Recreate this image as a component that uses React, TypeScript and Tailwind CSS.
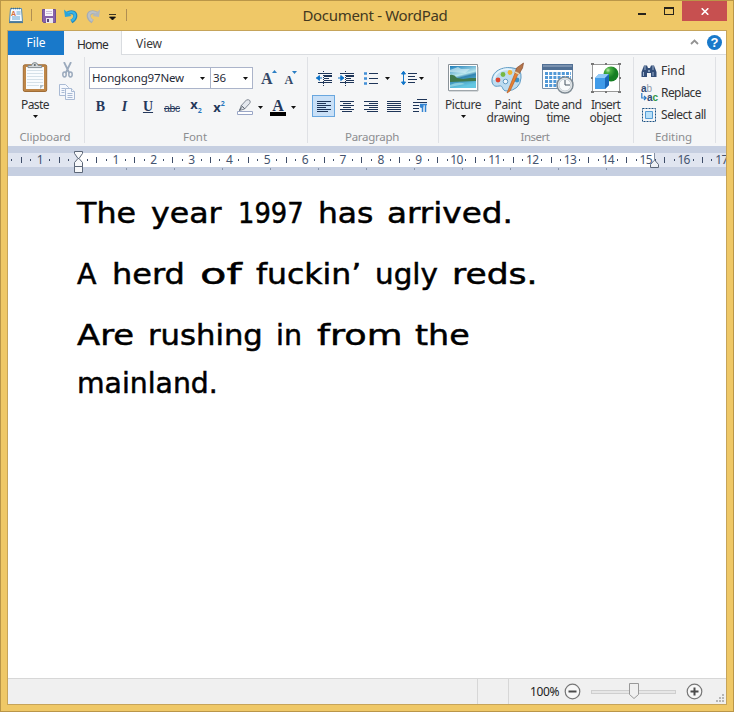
import { useLayoutEffect, useRef, useState } from "react";
import type { ReactNode } from "react";

/** Text run whose tracking is adjusted so that it spans exactly `w` pixels. */
function Fit({ w, children, className = "" }: { w: number; children: string; className?: string }) {
  const ref = useRef<HTMLSpanElement>(null);
  const [spacing, setSpacing] = useState(0);
  useLayoutEffect(() => {
    if (ref.current) {
      const natural = ref.current.getBoundingClientRect().width;
      setSpacing((w - natural) / children.length);
    }
  }, [w, children]);
  return (
    <span ref={ref} className={`inline-block whitespace-pre ${className}`} style={{ letterSpacing: spacing }}>
      {children}
    </span>
  );
}

/** Word whose letters are widened or narrowed so that it spans exactly `w` pixels. */
function Stretch({ w, children, className = "" }: { w: number; children: string; className?: string }) {
  const ref = useRef<HTMLSpanElement>(null);
  const [scale, setScale] = useState(1);
  useLayoutEffect(() => {
    if (ref.current) setScale(w / ref.current.offsetWidth);
  }, [w, children]);
  return (
    <span className={`block shrink-0 ${className}`} style={{ width: w }}>
      <span ref={ref} className="inline-block origin-left whitespace-pre" style={{ transform: `scaleX(${scale})` }}>
        {children}
      </span>
    </span>
  );
}

const Caret = ({ className = "" }: { className?: string }) => (
  <svg width="5" height="3" viewBox="0 0 5 3" className={`shrink-0 ${className}`}>
    <path d="M0 0h5L2.5 3z" fill="#111" />
  </svg>
);

function Group({ label, labelWidth, className, children }: { label: string; labelWidth: number; className: string; children: ReactNode }) {
  return (
    <section className={`flex h-[91px] shrink-0 flex-col ${className}`}>
      <div className="h-[74px]">{children}</div>
      <div className="flex h-4 items-center justify-center pr-[2px] text-[11.5px] leading-4 text-[#8c8d90]">
        <Fit w={labelWidth}>{label}</Fit>
      </div>
    </section>
  );
}

const Divider = () => <div className="mt-0.5 h-[86px] w-px shrink-0 bg-[#dfe1e5]" />;

function AppIcon() {
  return (
    <svg width="16" height="17" viewBox="0 0 16 17">
      <path d="M2.5 1.5h11l1 13h-13z" fill="#f3faff" stroke="#5a8cb0" />
      <path d="M3 1.5h10" stroke="#3f6f92" strokeWidth="1.5" strokeDasharray="1 1" />
      <text x="3" y="8.5" fontSize="7" fontWeight="bold" fontFamily="Liberation Sans" fill="#d9703b">A</text>
      <path d="M8.5 5h4M8.5 7h4M4 10h8M4 12h8" stroke="#69a6d3" />
      <path d="M1 15.3h14" stroke="#4c7896" strokeWidth="1.6" />
    </svg>
  );
}

function SaveIcon() {
  return (
    <svg width="14" height="14" viewBox="0 0 14 14">
      <path d="M.5.5h13v13H1.5l-1-1z" fill="#8862a9" stroke="#70518f" />
      <path d="M3 0h8v7H3z" fill="#f8f4fb" />
      <path d="M4 2.5h6M4 4.5h6" stroke="#cdbfd9" />
      <path d="M4 9h7v5H4z" fill="#e9e5ed" />
      <path d="M5 10h2v3H5z" fill="#5b4474" />
    </svg>
  );
}

function UndoIcon({ redo = false }: { redo?: boolean }) {
  return (
    <svg width="14" height="15" viewBox="0 0 14 15" className={redo ? "-scale-x-100" : ""}>
      <path d="M3 4.8c5-3.2 9-1 8.2 3.2-.4 2-1.7 3.4-3.9 4.6" fill="none" stroke={redo ? "#a5acb3" : "#2188bd"} strokeWidth="4" />
      <path d="M3 4.6c5-3 8.5-1 7.9 3-.4 2-1.6 3.3-3.4 4.2" fill="none" stroke={redo ? "#bcc1c5" : "#37b4e6"} strokeWidth="2.4" />
      <path d="M0 .5 1 8l6.5-1z" fill={redo ? "#b1b7bd" : "#2aa5dc"} />
    </svg>
  );
}

function TitleBar() {
  return (
    <header className="grid h-[30px] grid-cols-[222px_306px_206px]">
      <div className="flex h-[30px] items-center pl-2">
        <AppIcon />
        <div className="ml-[7px] h-3 w-px bg-[#b08e52]" />
        <div className="ml-2.5 flex pt-0.5"><SaveIcon /></div>
        <div className="ml-2 flex pt-0.5"><UndoIcon /></div>
        <div className="ml-2 flex pt-0.5"><UndoIcon redo /></div>
        <svg width="7" height="7" viewBox="0 0 7 7" className="ml-[9px] mt-1">
          <path d="M0 .5h7M.5 3h6L3.5 6z" fill="#111" stroke="#111" strokeWidth=".8" />
        </svg>
        <div className="ml-[10px] h-3 w-px bg-[#b08e52]" />
      </div>
      <div className="flex items-center justify-center text-[15px] leading-5 text-[#43391f]">
        <Fit w={145}>Document - WordPad</Fit>
      </div>
      <div className="flex justify-end pt-px">
        <div className="mr-[18px] mt-3 h-[2px] w-2 bg-[#27231b]" />
        <div className="mr-2 mt-[6px] h-2 w-2.5 border border-t-2 border-[#27231b]" />
        <div className="mr-[7px] flex h-5 w-[45px] items-center justify-center bg-[#c75050]">
          <svg width="8" height="7" viewBox="0 0 8 7"><path d="m.7.3 6.6 6.4m0-6.4L.7 6.7" stroke="#fff" strokeWidth="1.6" /></svg>
        </div>
      </div>
    </header>
  );
}

function Tabs() {
  return (
    <nav className="flex h-6 bg-white text-[12px] leading-4">
      <div className="flex w-14 items-center justify-center bg-[#1979ca] text-white"><Fit w={19}>File</Fit></div>
      <div className="flex w-[58px] items-center justify-center border-r border-[#d9dce0] bg-[#f5f6f7] pt-[3px] text-[#2c2c2c]"><Fit w={31}>Home</Fit></div>
      <div className="flex flex-1 items-center border-b border-[#d9dce0] pl-[14px] pt-[3px] text-[#3a3a3a]">
        <Fit w={26}>View</Fit>
        <svg width="9" height="6" viewBox="0 0 9 6" className="ml-auto mb-1"><path d="m1 5 3.5-3.5L8 5" fill="none" stroke="#929292" strokeWidth="1.8" /></svg>
        <div className="mb-1 ml-2 mr-1 flex size-[15px] items-center justify-center rounded-full bg-[#1979ca] font-['Liberation_Sans'] text-[13px] font-bold leading-none text-white">?</div>
      </div>
    </nav>
  );
}

function PasteIcon() {
  return (
    <svg width="26" height="32" viewBox="0 0 26 32">
      <rect x="1.3" y="3.8" width="23.4" height="26.7" rx="1.5" fill="#bf8748" stroke="#a06d36" />
      <path d="M4 6h18v22H4z" fill="#f9fcfe" />
      <path d="M5 9.5h16M5 12.5h16M5 15.5h16M5 18.5h16M5 21.5h16M5 24.5h12" stroke="#d5e1e9" />
      <path d="M18 28v-4h4z" fill="#adbdc7" />
      <path d="M6 6.6V4.5h3.5Q10 1.6 12.8 1.6t3.4 2.9h3.5v2.1z" fill="#d3d7d9" stroke="#838c90" />
      <circle cx="12.8" cy="3.9" r="1" fill="#59646a" />
    </svg>
  );
}

function Clipboard() {
  return (
    <Group label="Clipboard" labelWidth={51} className="w-[76px]">
      <div className="flex">
        <div className="flex w-[54px] flex-col items-center pt-[6px]">
          <PasteIcon />
          <div className="mt-1 text-[12px] leading-4 text-[#333]"><Fit w={28}>Paste</Fit></div>
          <Caret className="mt-[2px]" />
        </div>
        <div className="-ml-[3px] flex w-4 flex-col items-center pt-[7px]">
          <svg width="11" height="16" viewBox="0 0 11 16" fill="none" stroke="#9baabd">
            <path d="m2 0 5.3 11M9 0 3.7 11" strokeWidth="1.8" />
            <ellipse cx="2.5" cy="12.5" rx="1.7" ry="2.4" strokeWidth="1.5" />
            <ellipse cx="8.5" cy="12.5" rx="1.7" ry="2.4" strokeWidth="1.5" />
          </svg>
          <svg width="16" height="16" viewBox="0 0 16 16" className="mt-1.5" fill="#f5f8fd" stroke="#a9bad4">
            <path d="M.5.5h6l3 3v8h-9z" /><path d="M2.5 4.5h4m-4 2h3m-3 2h3" />
            <path d="M6.5 4.5h6l3 3v8h-9z" /><path d="M12.5 4.5v3h3m-7 2h5m-5 2h5m-5 2h5" />
          </svg>
        </div>
      </div>
    </Group>
  );
}

function FontGroup() {
  return (
    <Group label="Font" labelWidth={24} className="w-[222px]">
      <div className="flex pl-1 pt-3 text-[11.5px] text-[#1f2937]">
        <div className="flex h-[22px] w-[122px] items-center justify-between border border-[#abb4ca] bg-white pl-[2px] pr-[5px]">
          <Fit w={92}>Hongkong97New</Fit><Caret />
        </div>
        <div className="-ml-px flex h-[22px] w-[43px] items-center justify-between border border-[#abb4ca] bg-white pl-[2px] pr-[4px]">
          <Fit w={13}>36</Fit><Caret />
        </div>
        <div className="ml-2 flex font-['Liberation_Serif'] font-bold leading-none text-[#334766]">
          <span className="mt-1 text-[16px]">A</span>
          <svg width="5" height="3" viewBox="0 0 5 3" className="mt-[3px] -ml-px"><path d="M0 3 2.5 0 5 3z" fill="#2a7ec4" /></svg>
          <span className="ml-[8px] mt-[7px] text-[12px]">A</span>
          <svg width="5" height="3" viewBox="0 0 5 3" className="-ml-px mt-1"><path d="M0 0h5L2.5 3z" fill="#2a7ec4" /></svg>
        </div>
      </div>
      <div className="mt-2 flex h-5 items-center pl-[3px] font-['Liberation_Serif'] text-[14px] font-bold leading-none text-[#25385b]">
        <span className="w-[25px] text-center">B</span>
        <span className="w-[23px] text-center italic">I</span>
        <span className="w-[24px] text-center underline">U</span>
        <span className="w-[24px] pl-1 pt-0.5 font-['Liberation_Sans'] text-[10.5px] font-normal"><Fit w={16} className="line-through">abc</Fit></span>
        <span className="flex w-6 items-center justify-center font-['Noto_Sans'] text-[13px]"><span className="-mt-1.5">x</span><span className="mt-1.5 text-[7px] text-[#2877bd]">2</span></span>
        <span className="flex w-[22px] items-center justify-center font-['Noto_Sans'] text-[13px]"><span>x</span><span className="-mt-2 text-[7px] text-[#2877bd]">2</span></span>
        <svg width="16" height="17" viewBox="0 0 16 17" className="ml-[7px]">
          <path d="m2.5 11.5 1.8-5L9.5.9q2.5-.6 3.4.7.9 1.6-.4 3L7.5 10z" fill="#e4e8ee" stroke="#7f8793" />
          <path d="m4.3 6.7 3.4 3M2.5 11.5l2-3" stroke="#4d5661" />
          <path d="M.5 12.5h15v3H.5z" fill="#fff" stroke="#9aa6c6" />
        </svg>
        <Caret className="ml-[5px]" />
        <div className="ml-[7px] flex w-4 flex-col items-center">
          <span className="h-[13px] text-[16px] leading-[13px]">A</span>
          <span className="h-1 w-4 bg-black" />
        </div>
        <Caret className="ml-[5px]" />
      </div>
    </Group>
  );
}

function Lines({ kind }: { kind: "left" | "center" | "right" | "full" }) {
  const d = {
    left: "M0 .5h14M0 2.5h9M0 4.5h14M0 6.5h9M0 8.5h14M0 10.5h11",
    center: "M0 .5h14M3 2.5h8M0 4.5h14M3 6.5h8M0 8.5h14M2 10.5h10",
    right: "M0 .5h14M5 2.5h9M0 4.5h14M5 6.5h9M0 8.5h14M3 10.5h11",
    full: "M0 .5h14M0 2.5h14M0 4.5h14M0 6.5h14M0 8.5h14M0 10.5h14",
  }[kind];
  return <svg width="14" height="11" viewBox="0 0 14 11"><path d={d} stroke="#1e3558" /></svg>;
}

function Indent({ out = false }: { out?: boolean }) {
  return (
    <svg width="17" height="15" viewBox="0 0 17 15">
      <path d="M2 2.5h14M8 5h8M8 7.5h5M8 9.5h8M2 11.5h14" stroke="#1e3558" />
      <path d="M8 5h8" stroke="#1e3558" strokeWidth="2" />
      <path d="M7.5 0v15" stroke="#1e3558" strokeDasharray="1 1" />
      <path d={out ? "M0 7h6M3.4 4.5 .6 7l2.8 2.5z" : "M0 7h6M2.8 4.5 5.8 7l-3 2.5z"} fill="#0c72c8" stroke="#0c72c8" />
    </svg>
  );
}

function ParagraphGroup() {
  return (
    <Group label="Paragraph" labelWidth={54} className="w-[130px]">
      <div className="flex h-[22px] items-center pl-2 mt-3">
        <Indent out />
        <div className="ml-[5px] flex"><Indent /></div>
        <svg width="14" height="13" viewBox="0 0 14 13" className="ml-[9px]">
          <path d="M5 1.5h9M5 6.5h9M5 11.5h9" stroke="#1e3558" />
          <path d="M0 1.5h3M0 6.5h3M0 11.5h3" stroke="#4390d8" strokeWidth="2.6" />
        </svg>
        <Caret className="ml-[7px]" />
        <svg width="16" height="16" viewBox="0 0 16 16" className="ml-[11px]">
          <path d="M7 3.5h9M7 6.5h7M7 9.5h9M7 12.5h7" stroke="#1e3558" />
          <path d="M2.5 3v10M.5 4l2-2.8L4.5 4zM.5 12l2 2.8 2-2.8z" fill="#1176ca" stroke="#1176ca" />
        </svg>
        <Caret className="ml-[2px]" />
      </div>
      <div className="mt-[6px] flex h-[22px] items-center pl-1">
        <div className="flex h-[22px] w-[23px] items-center justify-center border border-[#69a7df] bg-[#c9e0f7]"><Lines kind="left" /></div>
        <div className="ml-[5px] flex"><Lines kind="center" /></div>
        <div className="ml-[10px] flex"><Lines kind="right" /></div>
        <div className="ml-[9px] flex"><Lines kind="full" /></div>
        <svg width="14" height="14" viewBox="0 0 14 14" className="ml-3">
          <path d="M4 .5h10M0 3.5h14M0 6.5h6M0 9.5h6M0 12.5h6" stroke="#1e3558" />
          <path d="M9.5 5v8M12.5 5v8M7 5.5h7" stroke="#3384d2" strokeWidth="1.5" /><circle cx="8.6" cy="7" r="2" fill="#3384d2" />
        </svg>
      </div>
    </Group>
  );
}

function PictureIcon() {
  return (
    <svg width="31" height="28" viewBox="0 0 31 28">
      <defs>
        <linearGradient id="sky" x2=".3" y2="1"><stop stopColor="#197bb9" /><stop offset=".48" stopColor="#b9e7ed" /><stop offset=".6" stopColor="#3284b1" /><stop offset="1" stopColor="#65c7e1" /></linearGradient>
      </defs>
      <path d="M.5.5h29v26H.5z" fill="#fff" stroke="#8a9299" />
      <path d="M2 2h26v22H2z" fill="url(#sky)" />
      <path d="m2 6 8-3 3 2 9 0-5 4-15-1z" fill="#d9f1f6" opacity=".6" />
      <path d="M2 11q4-1 7 3l6 1 7-1 6 0v3L2 18z" fill="#3f794b" />
      <path d="M2 21q9-4 15-1l-15 3z" fill="#a9e1e8" opacity=".65" />
      <path d="M1 27h29V3" fill="none" stroke="#b4babd" />
    </svg>
  );
}

function PaintIcon() {
  return (
    <svg width="34" height="33" viewBox="0 0 34 33">
      <path d="M1 20C0 9 12 4 22 6q9 1 8 10-1 12-14 13c-6 0-3-6-8-5-5 1-6-1-7-4z" fill="#bddcf0" stroke="#5f9bc4" />
      <path d="M3 18C4 9 13 6 21 8" fill="none" stroke="#e4f3fb" strokeWidth="2" />
      <circle cx="7" cy="18" r="2.4" fill="#df4530" /><circle cx="12" cy="12.5" r="2.4" fill="#76b842" /><circle cx="19" cy="10.5" r="2.4" fill="#efb334" /><circle cx="14.5" cy="19.5" r="2.3" fill="#f3f7fa" stroke="#629bc3" /><circle cx="26" cy="18" r="2.4" fill="#3a91c5" />
      <path d="m16 31 8.5-21 3 1-8.5 18z" fill="#e58032" stroke="#b95d22" strokeWidth=".7" />
      <path d="m24 11 1.5-5 7-5-1 5-3.5 6z" fill="#b57549" stroke="#8a4e31" strokeWidth=".7" />
      <path d="m24 10 4 2" stroke="#ecd1a4" strokeWidth="1.6" />
    </svg>
  );
}

function DateIcon() {
  return (
    <svg width="32" height="31" viewBox="0 0 32 31">
      <path d="M.5 1.5h30v24H.5z" fill="#fff" stroke="#7890a9" /><path d="M0 1h31v6H0z" fill="#506f94" /><path d="M1 2h29v2H1z" fill="#7991af" />
      <path d="M3 10.5h26M3 14.5h26M3 18.5h26M3 22.5h16" stroke="#5199d7" strokeWidth="3" strokeDasharray="3 1.2" />
      <circle cx="23" cy="22" r="8" fill="#e9ecee" stroke="#7e8a93" strokeWidth="1.5" /><circle cx="23" cy="22" r="6" fill="#f8fafb" stroke="#c6ced3" />
      <path d="M23 17v5h5" fill="none" stroke="#45535e" />
    </svg>
  );
}

function ObjectIcon() {
  return (
    <svg width="30" height="30" viewBox="0 0 30 30">
      <defs><radialGradient id="ball" cx=".3" cy=".25"><stop stopColor="#c0edb2" /><stop offset=".35" stopColor="#48ae42" /><stop offset="1" stopColor="#167f24" /></radialGradient></defs>
      <path d="M1.5 1.5h27v27h-27z" fill="#fff" stroke="#999" />
      <circle cx="20" cy="11" r="7.5" fill="url(#ball)" />
      <path d="m4 15 4-4h10v11l-4 4H4z" fill="#409be9" /><path d="m4 15 4-4h10l-4 4z" fill="#91c9f7" /><path d="m14 15 4-4v11l-4 4z" fill="#1c69bb" />
      <path d="M0 1h3M14 1h2M27 1h3M0 29h3M14 29h2M27 29h3M0 15h2M28 15h2" stroke="#777" strokeWidth="2" />
    </svg>
  );
}

function Tool({ icon, lines, widths, caret, className }: { icon: ReactNode; lines: string[]; widths: number[]; caret?: boolean; className: string }) {
  return (
    <div className={`flex flex-col items-center text-[12px] leading-[13px] text-[#373737] ${className}`}>
      <div className="flex h-[43px] items-center justify-center pt-[3px]">{icon}</div>
      {lines.map((line, i) => <Fit key={line} w={widths[i]}>{line}</Fit>)}
      {caret && <Caret className="mt-1" />}
    </div>
  );
}

function InsertGroup() {
  return (
    <Group label="Insert" labelWidth={29} className="w-[194px]">
      <div className="flex pl-[2px]">
        <Tool icon={<PictureIcon />} lines={["Picture"]} widths={[36]} caret className="w-11" />
        <Tool icon={<PaintIcon />} lines={["Paint", "drawing"]} widths={[27, 43]} className="w-[46px]" />
        <Tool icon={<DateIcon />} lines={["Date and", "time"]} widths={[47, 23]} className="w-[54px]" />
        <Tool icon={<ObjectIcon />} lines={["Insert", "object"]} widths={[29, 32]} className="w-[41px]" />
      </div>
    </Group>
  );
}

function EditingGroup() {
  return (
    <Group label="Editing" labelWidth={37} className="w-[81px]">
      <div className="flex flex-col pl-[7px] pt-[5px] text-[12px] leading-4 text-[#333]">
        <div className="flex h-[22px] items-center">
          <svg width="16" height="13" viewBox="0 0 16 13">
            <path d="M3 .5h3l1 2.5h2l1-2.5h3l2.5 6.5v5H10V8H6v4H.5V7z" fill="#334e78" />
            <path d="M4 1v4M12 1v4M2.5 7v4M12 7v4" stroke="#9eb3cf" /><path d="M7 5h2v2H7z" fill="#89a1bf" />
          </svg>
          <Fit w={24} className="ml-1">Find</Fit>
        </div>
        <div className="flex h-[22px] items-center">
          <div className="flex w-4 flex-col font-['Liberation_Sans'] text-[10px] font-bold leading-[9px] text-[#2e4974]">
            <div>a<span className="font-normal text-[#919baa]">b</span></div>
            <div className="flex"><svg width="6" height="9" viewBox="0 0 6 9" className="shrink-0"><path d="M.8 0v5H5M3 3l2.2 2L3 7" fill="none" stroke="#2878c5" strokeWidth="1.2" /></svg>a<span className="text-[#329647]">c</span></div>
          </div>
          <Fit w={40} className="ml-1">Replace</Fit>
        </div>
        <div className="flex h-[22px] items-center">
          <svg width="16" height="15" viewBox="0 0 16 15"><path d="M1.5.5h13v13h-13z" fill="none" stroke="#1b5183" strokeDasharray="2 1" /><path d="M4.5 3.5h7v7h-7z" fill="#b9e1fa" stroke="#559bd3" /></svg>
          <Fit w={45} className="ml-1">Select all</Fit>
        </div>
      </div>
    </Group>
  );
}

function Ruler() {
  const labels = ["1", "", ...Array.from({ length: 17 }, (_, i) => String(i + 1))];
  const tabStops = Array.from({ length: 11 }, (_, i) => i);
  return (
    <div className="relative h-[30px] overflow-hidden bg-[#c6cfe1] pt-[7px]">
      <div className="grid h-[14px] grid-cols-[70px_576px_72px]">
        <div className="bg-[#e0e5f0]" /><div className="bg-white" /><div className="bg-[#e0e5f0]" />
      </div>
      <div className="-ml-[0.9px] -mt-[15px] flex h-4 w-[720px]">
        {labels.map((label, i) => (
          <div key={i} className="grid w-[37.85px] shrink-0 grid-cols-4 items-center justify-items-center text-[12px] leading-4 text-[#44546f]">
            <i className="h-0.5 w-px bg-[#3e4d68]" /><i className="h-1.5 w-px bg-[#3e4d68]" /><i className="h-0.5 w-px bg-[#3e4d68]" />
            <span className={label.length > 1 ? "-mx-1 tracking-[-0.7px]" : ""}>{label}</span>
          </div>
        ))}
      </div>
      <div className="ml-[94px] flex">
        {tabStops.map((n) => <div key={n} className="w-12"><div className="ml-6 h-0.5 w-px bg-[#8996ac]" /></div>)}
      </div>
      <svg width="10" height="24" viewBox="0 0 10 24" className="absolute left-[66px] top-1" fill="#f7f8fa" stroke="#5c6778">
        <path d="M.5 1.5h8v2L5 8.5h-1L.5 3.5zM.5 16.5v-4L4 8.5h1l3.5 4v4zM.5 16.5h8v6h-8z" />
      </svg>
      <svg width="10" height="18" viewBox="0 0 10 18" className="absolute left-[642px] top-[5px]" fill="#eef1f5" stroke="#5c6778">
        <path d="M.5 16.5v-3L4 9.5h1l3.5 4v3z" /><path d="M4.5 2v8" stroke="#8792a5" />
      </svg>
    </div>
  );
}

type Word = [text: string, width: number, marginLeft: string];

function DocLine({ words, className }: { words: Word[]; className: string }) {
  return (
    <p className={`flex h-8 leading-8 ${className}`}>
      {words.map(([text, width, gap]) => <Stretch key={text} w={width} className={gap}>{text}</Stretch>)}
    </p>
  );
}

function Page() {
  return (
    <main className="h-[502px] bg-white pl-[69px] pt-[22px] font-['DejaVu_Sans'] text-[28.5px] text-black [-webkit-text-stroke:0.5px_#000]">
      <DocLine className="" words={[["The", 59, ""], ["year", 71, "ml-[15px]"], ["1997", 66, "ml-[16px]"], ["has", 55, "ml-[14px]"], ["arrived.", 126, "ml-[14px]"]]} />
      <DocLine className="mt-[29px]" words={[["A", 20, ""], ["herd", 73, "ml-[15px]"], ["of", 41, "ml-[15px]"], ["fuckin’", 105, "ml-[15px]"], ["ugly", 63, "ml-[14px]"], ["reds.", 86, "ml-[14px]"]]} />
      <DocLine className="mt-[29px]" words={[["Are", 57, ""], ["rushing", 115, "ml-[14px]"], ["in", 26, "ml-[13px]"], ["from", 85, "ml-[15px]"], ["the", 55, "ml-[13px]"]]} />
      <DocLine className="mt-4" words={[["mainland.", 141, ""]]} />
    </main>
  );
}

function ZoomButton({ plus = false }: { plus?: boolean }) {
  return (
    <svg width="17" height="17" viewBox="0 0 17 17">
      <circle cx="8.5" cy="8.5" r="7.3" fill="#f7f7f7" stroke="#777" strokeWidth="1.2" />
      <path d={plus ? "M4.5 8.5h8m-4-4v8" : "M4.5 8.5h8"} stroke="#4b4b4b" strokeWidth="2" />
    </svg>
  );
}

function StatusBar() {
  return (
    <footer className="flex h-[26px] items-center border-t border-[#d7d7d7] bg-[#f0f0f0] text-[12px] text-[#222]">
      <div className="h-full w-[470px] border-r border-[#d7d7d7]" />
      <div className="h-full w-[31px] border-r border-[#d7d7d7]" />
      <div className="ml-[21px] w-[34px]"><Fit w={29}>100%</Fit></div>
      <ZoomButton />
      <div className="relative ml-[10px] h-1 w-[85px] border border-[#cfcfcf] bg-[#e7e7e7]">
        <svg width="11" height="16" viewBox="0 0 11 16" className="absolute -top-[8px] left-[37px]"><path d="M.5.5h9v11L5 15.5.5 11.5z" fill="#f0f0f0" stroke="#999" /></svg>
      </div>
      <div className="ml-[10px] flex"><ZoomButton plus /></div>
      <svg width="8" height="8" viewBox="0 0 8 8" className="ml-auto mr-0.5 mb-0.5 self-end" fill="#b6b6b6"><path d="M6 0h2v2H6zM3 3h2v2H3zM6 3h2v2H6zM0 6h2v2H0zM3 6h2v2H3zM6 6h2v2H6z" /></svg>
    </footer>
  );
}

export default function App() {
  return (
    <div className="h-[712px] w-[734px] overflow-hidden bg-[#efc867] font-['Noto_Sans',sans-serif] shadow-[inset_0_0_0_1px_#ba9648]">
      <TitleBar />
      <div className="mx-[7px] h-[675px] border border-[#c6a45a]">
        <Tabs />
        <div className="flex h-[91px] bg-[#f5f6f7]">
          <Clipboard /><Divider /><FontGroup /><Divider /><ParagraphGroup /><Divider /><InsertGroup /><Divider /><EditingGroup /><Divider />
        </div>
        <Ruler />
        <Page />
        <StatusBar />
      </div>
    </div>
  );
}
